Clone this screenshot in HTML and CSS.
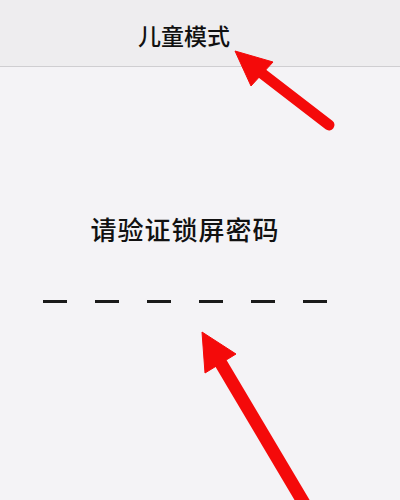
FILE: index.html
```html
<!DOCTYPE html>
<html lang="zh">
<head>
<meta charset="utf-8">
<link rel="stylesheet" href="styles.css">
</head>
<body>
<div class="screen">
  <header class="nav">
    <h1 class="nav-title">儿童模式</h1>
  </header>
  <main class="content">
    <h2 class="prompt">请验证锁屏密码</h2>
    <div class="dashes">
      <span class="dash"></span><span class="dash"></span><span class="dash"></span>
      <span class="dash"></span><span class="dash"></span><span class="dash"></span>
    </div>
  </main>
  <svg class="arrows" width="400" height="500" viewBox="0 0 400 500">
    <g fill="#f40a0a" stroke="#f40a0a" stroke-linejoin="round">
      <line x1="329" y1="125" x2="255" y2="68" stroke-width="11" stroke-linecap="round"/>
      <polygon points="235,51 273,62 251,86" stroke-width="1"/>
      <line x1="308" y1="510" x2="216" y2="355" stroke-width="13" stroke-linecap="butt"/>
      <polygon points="202,332 236,354 205,373" stroke-width="1"/>
    </g>
  </svg>
</div>
</body>
</html>
```
FILE: styles.css
```css
html, body {
  margin: 0;
  padding: 0;
}
body {
  width: 400px;
  height: 500px;
  overflow: hidden;
  background: #f4f3f6;
  font-family: "Noto Sans CJK SC", "Noto Sans", sans-serif;
}
.screen {
  position: relative;
  width: 400px;
  height: 500px;
}
.nav {
  height: 66px;
  background: #eeedef;
  border-bottom: 1px solid #cfced1;
  display: flex;
  justify-content: center;
  align-items: center;
  padding-right: 32px;
}
.nav-title {
  margin: 0;
  font-size: 23px;
  font-weight: 500;
  color: #111;
  line-height: 1;
  padding-top: 5px;
}
.content {
  display: flex;
  flex-direction: column;
  align-items: center;
  padding-right: 30px;
}
.prompt {
  margin: 149px 0 0 0;
  font-size: 26px;
  font-weight: 500;
  color: #111;
  line-height: 1;
  letter-spacing: 1px;
}
.dashes {
  display: flex;
  gap: 28px;
  margin-top: 58px;
}
.dash {
  display: block;
  width: 24px;
  height: 3px;
  background: #1a1a1a;
}
.arrows {
  position: absolute;
  left: 0;
  top: 0;
  pointer-events: none;
}
```
